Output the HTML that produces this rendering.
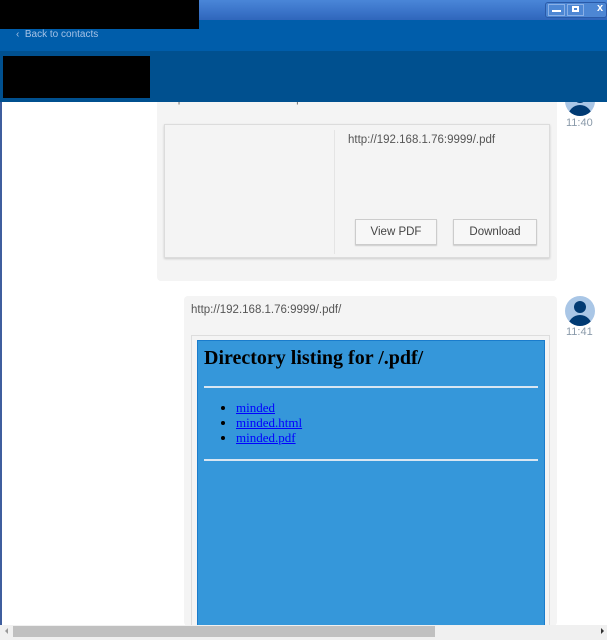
<!DOCTYPE html>
<html><head><style>
*{margin:0;padding:0;box-sizing:border-box}
body{width:607px;height:640px;overflow:hidden;position:relative;background:#fff;font-family:"Liberation Sans",sans-serif}
.a{position:absolute}
</style></head><body>
<div class="a" style="left:0;top:0;width:607px;height:20px;background:linear-gradient(#4a86d8,#3a73c8 60%,#2f66bb)"></div>
<div class="a" style="left:545px;top:2px;width:62px;height:16px;background:#4d87d4;border:1px solid #2a5aa8;border-radius:3px"></div>
<div class="a" style="left:548px;top:4px;width:17px;height:12px;border:1px solid #8ab0e6;"></div>
<div class="a" style="left:552px;top:10px;width:9px;height:2px;background:#fff"></div>
<div class="a" style="left:567px;top:4px;width:17px;height:12px;border:1px solid #8ab0e6;"></div>
<div class="a" style="left:572px;top:6px;width:7px;height:6px;border:2px solid #fff"></div>
<div class="a" style="left:597px;top:2px;color:#fff;font-size:11px;font-weight:bold">x</div>
<div class="a" style="left:0;top:20px;width:607px;height:31px;background:#005daa"></div>
<div class="a" style="left:16px;top:29px;color:#a5c2e6;font-size:10px">&lsaquo;&nbsp; Back to contacts</div>

<div class="a" style="left:157px;top:88px;width:400px;height:193px;background:#f4f4f4;border-radius:4px"></div>
<div class="a" style="left:165px;top:93px;color:#777;font-size:11.5px">http://192.168.1.76:9999/.pdf</div>
<div class="a" style="left:565px;top:86px;width:30px;height:30px;background:#a9c6e6;border-radius:50%;overflow:hidden">
<div style="position:absolute;left:9px;top:5px;width:12px;height:12px;border-radius:50%;background:#003a73"></div>
<div style="position:absolute;left:3px;top:19px;width:24px;height:16px;border-radius:12px 12px 0 0;background:#003a73"></div></div>

<div class="a" style="left:0;top:51px;width:607px;height:51px;background:#00508f"></div>
<div class="a" style="left:0;top:0;width:199px;height:29px;background:#000"></div>
<div class="a" style="left:3px;top:56px;width:147px;height:42px;background:#000"></div>
<div class="a" style="left:0;top:102px;width:2px;height:523px;background:#3f5e9e"></div>

<div class="a" style="left:164px;top:124px;width:386px;height:134px;border:1px solid #dcdcdc;box-shadow:0 1px 2px #ccc;background:#f4f4f4"></div>
<div class="a" style="left:334px;top:130px;width:1px;height:124px;background:#e4e4e4"></div>
<div class="a" style="left:348px;top:134px;color:#555;font-size:11.5px">http://192.168.1.76:9999/.pdf</div>
<div class="a" style="left:355px;top:219px;width:82px;height:26px;border:1px solid #ccc;background:#f7f7f7;box-shadow:0 1px 1px #ccc;color:#444;font-size:11.5px;text-align:center;line-height:24px">View PDF</div>
<div class="a" style="left:453px;top:219px;width:84px;height:26px;border:1px solid #ccc;background:#f7f7f7;box-shadow:0 1px 1px #ccc;color:#444;font-size:11.5px;text-align:center;line-height:24px">Download</div>
<div class="a" style="left:566px;top:117px;color:#8a9aaa;font-size:11px">11:40</div>

<div class="a" style="left:184px;top:296px;width:373px;height:330px;background:#f4f4f4;border-radius:4px"></div>
<div class="a" style="left:191px;top:304px;color:#555;font-size:11.5px">http://192.168.1.76:9999/.pdf/</div>
<div class="a" style="left:191px;top:335px;width:359px;height:291px;border:1px solid #ddd;background:#f4f4f4"></div>
<div class="a" style="left:197px;top:340px;width:348px;height:286px;background:#3597da;border:1px solid #1a7ccc;font-family:'Liberation Serif',serif">
<div style="position:absolute;left:6px;top:6px;font-size:20px;font-weight:bold;color:#000">Directory listing for /.pdf/</div>
<div style="position:absolute;left:6px;top:45px;width:334px;height:2px;background:#d8e6f2"></div>
<ul style="position:absolute;left:38px;top:59px;font-size:13px;line-height:15px;color:#000">
<li><a style="color:#00f;text-decoration:underline">minded</a></li><li><a style="color:#00f;text-decoration:underline">minded.html</a></li><li><a style="color:#00f;text-decoration:underline">minded.pdf</a></li></ul>
<div style="position:absolute;left:6px;top:118px;width:334px;height:2px;background:#d8e6f2"></div>
</div>
<div class="a" style="left:565px;top:296px;width:30px;height:30px;border-radius:50%;background:#a9c6e6;overflow:hidden">
<div style="position:absolute;left:9px;top:5px;width:12px;height:12px;border-radius:50%;background:#003a73"></div>
<div style="position:absolute;left:3px;top:19px;width:24px;height:16px;border-radius:12px 12px 0 0;background:#003a73"></div></div>
<div class="a" style="left:566px;top:326px;color:#8a9aaa;font-size:11px">11:41</div>

<div class="a" style="left:0;top:625px;width:607px;height:15px;background:#f0f0f0"></div>
<div class="a" style="left:13px;top:626px;width:422px;height:11px;background:#c0c0c0"></div>
<div class="a" style="left:5px;top:628px;width:0;height:0;border:3px solid transparent;border-right-color:#999;border-left:0"></div>
<div class="a" style="left:601px;top:628px;width:0;height:0;border:3px solid transparent;border-left-color:#333;border-right:0"></div>
</body></html>
